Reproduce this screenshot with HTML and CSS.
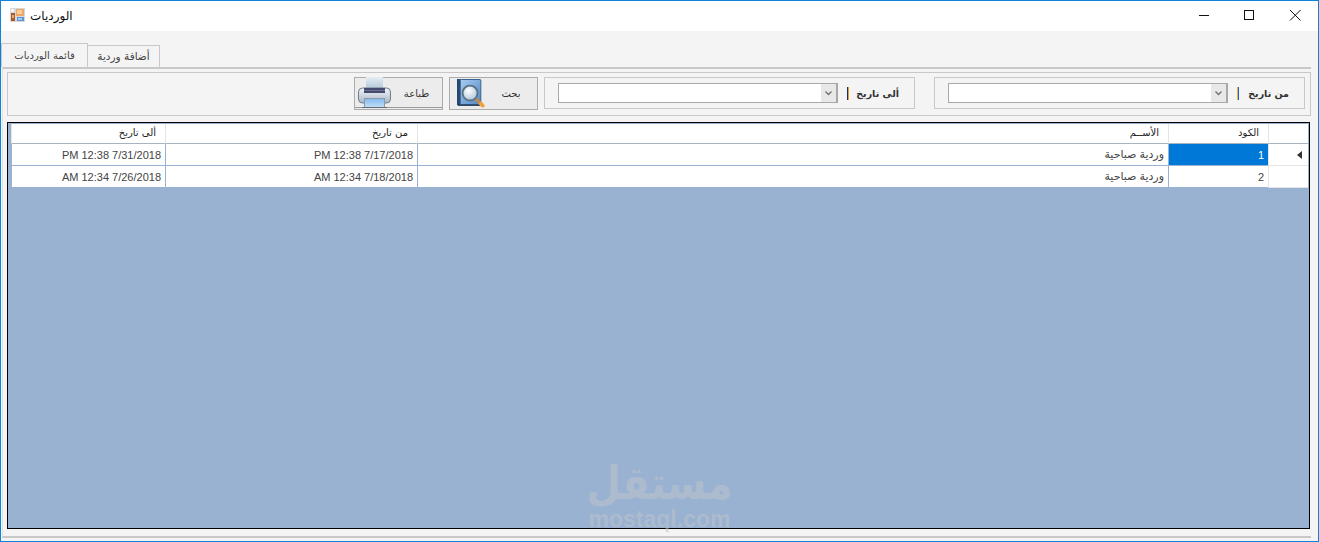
FILE: index.html
```html
<!DOCTYPE html>
<html lang="ar">
<head>
<meta charset="utf-8">
<title>الورديات</title>
<link rel="stylesheet" href="styles.css">
</head>
<body>
<div class="window">
  <header class="titlebar">
    <svg class="app-icon" width="15" height="15" viewBox="0 0 15 15">
      <rect x="0" y="0" width="15" height="14" fill="#d8d8d8"/>
      <rect x="1" y="1" width="3" height="3" fill="#f4f4f4"/>
      <rect x="1" y="5" width="4" height="8" fill="#a85a2a"/>
      <rect x="2" y="7" width="2" height="3" fill="#e8b070"/>
      <rect x="6" y="1" width="8" height="7" fill="#eda868"/>
      <rect x="7" y="2" width="5" height="4" fill="#f6cf9c"/>
      <rect x="7" y="9" width="7" height="4" fill="#5d93d8"/>
      <rect x="8" y="10" width="4" height="2" fill="#a8cdf2"/>
    </svg>
    <span class="title">الورديات</span>
    <div class="controls">
      <svg class="ctl" width="46" height="30" viewBox="0 0 46 30"><path d="M19 14.500h10" stroke="#111" fill="none"/></svg>
      <svg class="ctl" width="46" height="30" viewBox="0 0 46 30"><rect x="18.500" y="9.500" width="9" height="9" stroke="#111" fill="none"/></svg>
      <svg class="ctl" width="46" height="30" viewBox="0 0 46 30"><path d="M18 9l10.500 10.500M28.500 9L18 19.500" stroke="#111" fill="none"/></svg>
    </div>
  </header>

  <nav class="tabs">
    <div class="tab tab-active">قائمة الورديات</div>
    <div class="tab">أضافة وردية</div>
  </nav>

  <main class="page">
    <section class="filters">
      <div class="group">
        <span class="label">من تاريخ</span>
        <i class="sep sep-blue"></i>
        <div class="combo">
          <span class="combo-btn"><svg width="7" height="5" viewBox="0 0 7 5"><path d="M.5.500L3.500 3.500 6.500.500" fill="none" stroke="#707070" stroke-width="1.300"/></svg></span>
          <span class="combo-field"></span>
        </div>
      </div>
      <div class="group">
        <span class="label">ألى تاريخ</span>
        <i class="sep"></i>
        <div class="combo">
          <span class="combo-btn"><svg width="7" height="5" viewBox="0 0 7 5"><path d="M.5.500L3.500 3.500 6.500.500" fill="none" stroke="#707070" stroke-width="1.300"/></svg></span>
          <span class="combo-field"></span>
        </div>
      </div>
      <div class="action">
        <span class="action-text">بحث</span>
        <svg class="action-icon icon-book" width="28" height="29" viewBox="0 0 30 31">
          <defs>
            <linearGradient id="book" x1="0" y1="0" x2="1" y2="1"><stop offset="0" stop-color="#a8cdf0"/><stop offset="1" stop-color="#4f86c4"/></linearGradient>
            <radialGradient id="lens" cx=".4" cy=".35" r=".7"><stop offset="0" stop-color="#ffffff"/><stop offset="1" stop-color="#a9c2dc"/></radialGradient>
          </defs>
          <rect x="0" y="0" width="4" height="28" fill="#24486f"/>
          <rect x="3.500" y=".5" width="22" height="27" rx="1" fill="url(#book)" stroke="#2f5c8f"/>
          <path d="M1 28h24" stroke="#1c3553" stroke-width="1.500"/>
          <path d="M19 20l7 7" stroke="#b88a5a" stroke-width="4" stroke-linecap="round"/>
          <path d="M25.500 26.500l2 2" stroke="#f0a23c" stroke-width="4" stroke-linecap="round"/>
          <circle cx="14" cy="15" r="8" fill="url(#lens)" stroke="#5d7184" stroke-width="2"/>
        </svg>
      </div>
      <div class="action action-print">
        <span class="action-text">طباعة</span>
        <svg class="action-icon icon-printer" width="33" height="32" viewBox="0 0 33 32">
          <defs>
            <linearGradient id="paper" x1="0" y1="0" x2="0" y2="1"><stop offset="0" stop-color="#e4edf4"/><stop offset="1" stop-color="#b3c6d8"/></linearGradient>
            <linearGradient id="body" x1="0" y1="0" x2="0" y2="1"><stop offset="0" stop-color="#f2f5f8"/><stop offset="1" stop-color="#a9b8c8"/></linearGradient>
            <linearGradient id="tray" x1="0" y1="0" x2="0" y2="1"><stop offset="0" stop-color="#82baf0"/><stop offset="1" stop-color="#c4e0f8"/></linearGradient>
          </defs>
          <rect x="8" y="0" width="17" height="12" fill="url(#paper)"/>
          <rect x=".5" y="11" width="32" height="15" rx="4" fill="url(#body)" stroke="#6f7d8b"/>
          <rect x="6" y="11" width="21" height="5" fill="#44496d"/>
          <path d="M6 13.500h21" stroke="#6a7096"/>
          <rect x="6.500" y="21.500" width="20" height="9" fill="url(#tray)" stroke="#8c9aa8"/>
          <path d="M4 30.500h25" stroke="#626a74"/>
        </svg>
      </div>
    </section>

    <section class="grid">
      <table class="data">
        <colgroup>
          <col class="c-head"><col class="c-code"><col class="c-name"><col class="c-from"><col class="c-to">
        </colgroup>
        <thead>
          <tr><th></th><th>الكود</th><th>الأســم</th><th>من تاريخ</th><th>ألى تاريخ</th></tr>
        </thead>
        <tbody>
          <tr>
            <th class="row-head"><i class="arrow"></i></th>
            <td class="selected">1</td><td>وردية صباحية</td><td>7/17/2018 12:38 PM</td><td>7/31/2018 12:38 PM</td>
          </tr>
          <tr>
            <th class="row-head"></th>
            <td>2</td><td>وردية صباحية</td><td>7/18/2018 12:34 AM</td><td>7/26/2018 12:34 AM</td>
          </tr>
        </tbody>
      </table>
      <div class="watermark">
        <div class="wm-ar">مستقل</div>
        <div class="wm-en">mostaql.com</div>
      </div>
    </section>
  </main>
</div>
</body>
</html>
```
FILE: styles.css
```css
* { box-sizing: border-box; }
html, body { margin: 0; padding: 0; height: 100%; overflow: hidden; }
body { font-family: "Liberation Sans", "DejaVu Sans", sans-serif; font-size: 11px; color: #333; }

.window {
  width: 1319px;
  height: 542px;
  display: flex;
  flex-direction: column;
  background: #f4f4f4;
  border: 1px solid #0f82dc;
}

.titlebar {
  height: 30px;
  flex: none;
  display: flex;
  align-items: center;
  background: #fff;
  padding-left: 9px;
}
.app-icon { display: block; margin-top: -1px; }
.title { margin-left: 5px; font-family: "DejaVu Sans", sans-serif; font-size: 12px; color: #111; }
.controls { margin-left: auto; display: flex; }
.ctl { display: block; }

.tabs {
  flex: none;
  height: 36px;
  display: flex;
  align-items: flex-end;
}
.tab {
  height: 22px;
  width: 73px;
  margin-left: -1px;
  border: 1px solid #c8c8c8;
  border-bottom: 0;
  background: #f4f4f4;
  text-align: center;
  line-height: 21px;
  font-family: "DejaVu Sans", sans-serif;
  font-size: 10.500px;
  color: #444;
}
.tab-active {
  height: 24px;
  width: 87px;
  margin-left: 0;
  line-height: 24px;
  font-size: 10px;
}

.page {
  flex: 1;
  min-height: 0;
  display: flex;
  flex-direction: column;
  gap: 6px;
  margin: 0 7px 3px 1px;
  padding: 3px 0 7px 4px;
  border-top: 2px solid #c8c8c8;
  border-bottom: 2px solid #c8c8c8;
  border-left: 1px solid #e2e2e2;
}

.filters {
  flex: none;
  height: 44px;
  direction: rtl;
  display: flex;
  align-items: flex-start;
  padding: 4px 5px 0 0;
  border: 1px solid #c8c8c8;
}
.group {
  width: 371px;
  height: 32px;
  display: flex;
  align-items: center;
  padding: 0 15px 0 13px;
  border: 1px solid #c8c8c8;
  margin-left: 19px;
}
.group + .group { margin-left: 6px; }
.label {
  width: 36px;
  flex: none;
  white-space: nowrap;
  font-family: "DejaVu Sans", sans-serif;
  font-size: 9.500px;
  font-weight: bold;
  color: #333;
}
.sep {
  width: 2px;
  height: 13px;
  flex: none;
  margin: 0 14px 0 9px;
  background: linear-gradient(90deg, #1d2f55 50%, #e59a38 50%);
}
.sep-blue { background: linear-gradient(90deg, #e8b050 50%, #1f63c0 50%); }
.combo {
  flex: 1;
  height: 20px;
  display: flex;
  border: 1px solid #a8a8a8;
  background: #fff;
}
.combo-field { flex: 1; }
.combo-btn {
  width: 16px;
  flex: none;
  display: flex;
  align-items: center;
  justify-content: center;
  background: #e8e8e8;
  border-right: 1px solid #a8a8a8;
}
.combo-btn svg { display: block; }

.action {
  width: 89px;
  height: 33px;
  display: flex;
  align-items: center;
  background: #ececec;
  border: 1px solid #acacac;
  margin-left: 6px;
  flex: none;
}
.action-print {
  margin-left: 0;
  box-shadow: inset 0 -1px 0 #ececec, inset 0 -2px 0 #9a9a9a;
}
.action-text {
  flex: 1;
  text-align: center;
  font-family: "DejaVu Sans", sans-serif;
  font-size: 10px;
  color: #333;
}
.action-icon { display: block; flex: none; }
.icon-book { margin-left: 7px; }
.icon-printer { margin-left: 3px; margin-top: -1px; }

.grid {
  flex: 1;
  min-height: 0;
  position: relative;
  direction: rtl;
  background: #9ab2d1;
  border: 1px solid #000;
  padding: 1px 1px 0 0;
  margin-right: 1px;
}
.data {
  border-collapse: separate;
  border-spacing: 0;
  table-layout: fixed;
  width: 1297px;
  background: #fff;
}
.c-head { width: 40px; }
.c-code { width: 100px; }
.c-name { width: 751px; }
.c-from { width: 252px; }
.c-to { width: 154px; }
.data th, .data td {
  padding: 0 4px 0 5px;
  text-align: right;
  font-weight: normal;
  white-space: nowrap;
  overflow: hidden;
}
.data thead th {
  height: 20px;
  padding-right: 9px;
  padding-bottom: 2px;
  font-family: "DejaVu Sans", sans-serif;
  font-size: 10px;
  color: #222;
  background: #fff;
  border-left: 1px solid #e4e4e4;
  border-bottom: 1px solid #aab4be;
}
.data td {
  height: 22px;
  font-family: "Liberation Sans", "DejaVu Sans", sans-serif;
  font-size: 11px;
  color: #444;
  border-left: 1px solid #9ab2d1;
  border-bottom: 1px solid #9ab2d1;
}
.data tbody .row-head {
  background: #fff;
  border-left: 1px solid #e4e4e4;
  border-bottom: 1px solid #e4e4e4;
  padding: 0;
  position: relative;
}
.data td.selected { background: #0078d7; color: #fff; }
.arrow {
  position: absolute;
  right: 6px;
  top: 7px;
  width: 0;
  height: 0;
  border-top: 4px solid transparent;
  border-bottom: 4px solid transparent;
  border-right: 5px solid #333;
}

.watermark {
  position: absolute;
  left: 579px;
  top: 336px;
  width: 145px;
  direction: rtl;
  text-align: center;
  color: rgba(190, 196, 202, 0.5);
  pointer-events: none;
}
.wm-ar {
  font-family: "DejaVu Sans", sans-serif;
  font-weight: bold;
  font-size: 46px;
  line-height: 48px;
  transform: translateX(10px) scaleX(.87);
}
.wm-en {
  direction: ltr;
  font-family: "Liberation Sans", sans-serif;
  font-weight: bold;
  font-size: 23px;
  line-height: 24px;
}
```
